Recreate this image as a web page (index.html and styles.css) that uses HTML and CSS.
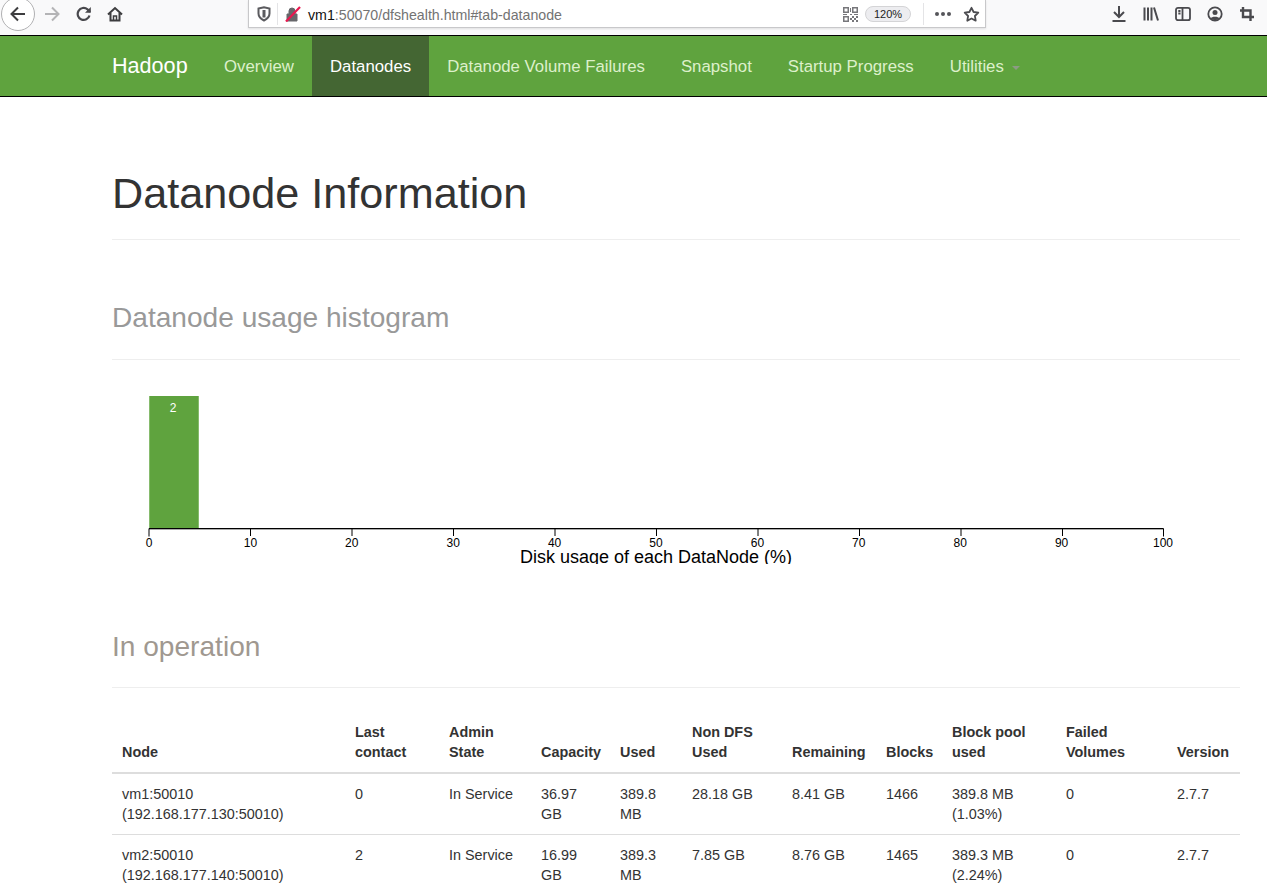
FILE: index.html
```html
<!DOCTYPE html>
<html lang="en">
<head>
    <meta charset="UTF-8">
    <title>Namenode information</title>
    <link rel="stylesheet" href="styles.css">
</head>
<body>
    <div class="browser-bar">
        <div class="nav-buttons">
            <span class="back-button">
                <svg width="18" height="18" viewBox="0 0 18 18" fill="none" stroke="#3d3d3f" stroke-width="2"><path d="M16 9H2.500M9 2.500 2.500 9 9 15.500"/></svg>
            </span>
            <svg class="forward-icon" width="18" height="18" viewBox="0 0 18 18" fill="none" stroke="#b4b4b6" stroke-width="2"><path d="M2 9h13.500M9 2.500 15.500 9 9 15.500"/></svg>
            <svg class="reload-icon" width="16" height="16" viewBox="0 0 16 16" fill="none" stroke="#48484c" stroke-width="2.200"><path d="M13.500 9.500A6 6 0 1 1 11.500 3.300L14 6"/><path d="M14.800 1v5.800H9" stroke="none" fill="#48484c"/></svg>
            <svg class="home-icon" width="16" height="16" viewBox="0 0 16 16" fill="none" stroke="#3d3d3f" stroke-width="2"><path d="M1 8.500 8 2l7 6.500M3.500 7v7.500h9V7"/><path d="M6.500 15V10h3v5" stroke-width="1.500"/></svg>
        </div>
        <div class="url-bar">
            <svg class="shield-icon" width="14" height="16" viewBox="0 0 14 16" fill="none" stroke="#5b5b5f" stroke-width="2"><path d="M1.500 2.500 7 1.200l5.500 1.300v5c0 3.500-2.500 5.500-5.500 7-3-1.500-5.500-3.500-5.500-7z"/><path d="M7 4v7.500" stroke-width="3"/></svg>
            <span class="url-divider"></span>
            <svg class="lock-icon" width="16" height="16" viewBox="0 0 16 16"><path d="M2 8h10v7H2zM4 8V5a3 3 0 0 1 6 0v3" fill="#66666a" stroke="#66666a"/><path d="M1 15.500 15 1" stroke="#e8174f" stroke-width="2.200"/></svg>
            <span class="url-text"><span class="url-host">vm1</span>:50070/dfshealth.html#tab-datanode</span>
            <svg class="qr-icon" width="15" height="15" viewBox="0 0 15 15" fill="#77777b"><path d="M0 0h6v6H0zM1.500 1.500v3h3v-3zM9 0h6v6H9zM10.500 1.500v3h3v-3zM0 9h6v6H0zM1.500 10.500v3h3v-3zM7 1h1v4H7zM7 7h2v1H7zM0 7h4v1H0zM11 7h4v1h-4zM9 9h2v2H9zM13 9h2v2h-2zM7 11h2v2H7zM11 11h2v2h-2zM9 13h2v2H9zM13 13h2v2h-2z"/></svg>
            <span class="zoom-pill">120%</span>
            <span class="url-divider url-divider-right"></span>
            <span class="dots"><i></i><i></i><i></i></span>
            <svg class="star-icon" width="17" height="17" viewBox="0 0 17 17" fill="none" stroke="#4c4c50" stroke-width="1.800"><path d="M8.500 1.800 10.600 6l4.700.7-3.400 3.300.8 4.700-4.200-2.200-4.200 2.200.8-4.700L1.700 6.700 6.400 6z" stroke-linejoin="round"/></svg>
        </div>
        <div class="tool-buttons">
            <svg width="16" height="16" viewBox="0 0 16 16" fill="none" stroke="#4a4a4e" stroke-width="2"><path d="M8 0v10.500M3 6l5 5 5-5M1.500 15h13"/></svg>
            <svg width="16" height="16" viewBox="0 0 16 16" fill="none" stroke="#4a4a4e" stroke-width="2"><path d="M1.500 1.500v13M5 1.500v13M8.500 1.500v13M11 1.500l4 13"/></svg>
            <svg width="16" height="16" viewBox="0 0 16 16" fill="none" stroke="#4a4a4e" stroke-width="1.800"><rect x="1" y="1.800" width="14" height="12.400" rx="2"/><path d="M7.500 2v12M3.300 5h2.200M3.300 7.500h2.200"/></svg>
            <svg width="16" height="16" viewBox="0 0 16 16"><circle cx="8" cy="8" r="6.700" fill="none" stroke="#4a4a4e" stroke-width="1.800"/><circle cx="8" cy="6.500" r="2.500" fill="#4a4a4e"/><path d="M3.500 12.500c1-2.500 8-2.500 9 0L8 14.500z" fill="#4a4a4e"/></svg>
            <svg width="16" height="16" viewBox="0 0 16 16" fill="none" stroke="#4a4a4e" stroke-width="2.400"><path d="M4 1v10h11M1 4.500h10.500V15"/></svg>
        </div>
    </div>

    <nav class="navbar">
        <div class="container navbar-inner">
            <a class="brand">Hadoop</a>
            <ul class="nav-list">
                <li>Overview</li>
                <li class="active">Datanodes</li>
                <li>Datanode Volume Failures</li>
                <li>Snapshot</li>
                <li>Startup Progress</li>
                <li>Utilities <span class="caret"></span></li>
            </ul>
        </div>
    </nav>

    <main class="container">
        <h1 class="page-title">Datanode Information</h1>
        <h2 class="section-title">Datanode usage histogram</h2>
        <svg class="histogram" width="1128" height="204" viewBox="0 0 1128 204">
            <rect x="37" y="36" width="50" height="132" fill="#5fa33e"/>
            <path d="M37.500 36v132M86.500 36v132" stroke="#86bb6d"/>
            <text class="bar-label" x="61" y="52">2</text>
            <path d="M37 169.500H1051.500" stroke="#aaa"/>
            <path d="M37 176.500V168.500H1051.500V176.500" fill="none" stroke="#000"/>
            <g class="ticks">
                <path d="M138.500 168v8M240 168v8M341.500 168v8M443 168v8M544.500 168v8M646 168v8M747.500 168v8M849 168v8M950.500 168v8" stroke="#000"/>
                <text x="37" y="187">0</text>
                <text x="138.400" y="187">10</text>
                <text x="239.800" y="187">20</text>
                <text x="341.200" y="187">30</text>
                <text x="442.600" y="187">40</text>
                <text x="544" y="187">50</text>
                <text x="645.400" y="187">60</text>
                <text x="746.800" y="187">70</text>
                <text x="848.200" y="187">80</text>
                <text x="949.600" y="187">90</text>
                <text x="1051" y="187">100</text>
            </g>
            <text class="axis-title" x="544" y="203">Disk usage of each DataNode (%)</text>
        </svg>
        <h2 class="section-title section-operation">In operation</h2>
        <table class="dn-table">
            <colgroup>
                <col class="col-node"><col class="col-contact"><col class="col-admin"><col class="col-capacity">
                <col class="col-used"><col class="col-nondfs"><col class="col-remaining"><col class="col-blocks">
                <col class="col-pool"><col class="col-failed"><col class="col-version">
            </colgroup>
            <thead>
                <tr>
                    <th>Node</th>
                    <th>Last<br>contact</th>
                    <th>Admin<br>State</th>
                    <th>Capacity</th>
                    <th>Used</th>
                    <th>Non DFS<br>Used</th>
                    <th>Remaining</th>
                    <th>Blocks</th>
                    <th>Block pool<br>used</th>
                    <th>Failed<br>Volumes</th>
                    <th>Version</th>
                </tr>
            </thead>
            <tbody>
                <tr>
                    <td>vm1:50010<br>(192.168.177.130:50010)</td>
                    <td>0</td>
                    <td>In Service</td>
                    <td>36.97<br>GB</td>
                    <td>389.8<br>MB</td>
                    <td>28.18 GB</td>
                    <td>8.41 GB</td>
                    <td>1466</td>
                    <td>389.8 MB<br>(1.03%)</td>
                    <td>0</td>
                    <td>2.7.7</td>
                </tr>
                <tr>
                    <td>vm2:50010<br>(192.168.177.140:50010)</td>
                    <td>2</td>
                    <td>In Service</td>
                    <td>16.99<br>GB</td>
                    <td>389.3<br>MB</td>
                    <td>7.85 GB</td>
                    <td>8.76 GB</td>
                    <td>1465</td>
                    <td>389.3 MB<br>(2.24%)</td>
                    <td>0</td>
                    <td>2.7.7</td>
                </tr>
            </tbody>
        </table>
    </main>
</body>
</html>
```

FILE: styles.css
```css
html, body {
    margin: 0;
    padding: 0;
    height: 892px;
    overflow: hidden;
    background-color: #fff;
}
body {
    font-family: "Liberation Sans", Arial, sans-serif;
    color: #333;
}
.browser-bar {
    display: flex;
    align-items: center;
    height: 35px;
    background-color: #f9f9fa;
    border-bottom: 1px solid #000;
}
.nav-buttons {
    display: flex;
    align-items: center;
    width: 248px;
    margin-top: -8px;
    padding-left: 1px;
    box-sizing: border-box;
}
.back-button {
    display: flex;
    align-items: center;
    justify-content: center;
    width: 34px;
    height: 34px;
    border: 1px solid #b1b1b3;
    border-radius: 50%;
    background-color: #fff;
    box-sizing: border-box;
}
.forward-icon {
    margin-left: 8px;
}
.reload-icon {
    margin-left: 15px;
}
.home-icon {
    margin-left: 15px;
}
.url-bar {
    display: flex;
    align-items: center;
    width: 738px;
    height: 28px;
    margin-top: -7px;
    padding: 1px 0 0 8px;
    box-sizing: border-box;
    background-color: #fff;
    border: 1px solid #c8c8ca;
    border-top: none;
    box-shadow: 0 1px 2px rgba(0, 0, 0, 0.1);
}
.url-divider {
    width: 1px;
    height: 22px;
    margin: 0 7px 0 6px;
    background-color: #e4e4e6;
}
.url-text {
    margin-left: 7px;
    padding-top: 2px;
    width: 535px;
    font-size: 14.200px;
    color: #737373;
}
.url-host {
    color: #111;
}
.zoom-pill {
    margin-left: 7px;
    padding: 1px 8px;
    font-size: 11px;
    color: #222;
    background-color: #ededf0;
    border: 1px solid #d4d4d6;
    border-radius: 9px;
}
.url-divider-right {
    margin: 0 11px 0 12px;
}
.dots {
    display: flex;
    gap: 2px;
}
.dots i {
    width: 4px;
    height: 4px;
    border-radius: 50%;
    background-color: #55555a;
}
.star-icon {
    margin-left: 12px;
}
.tool-buttons {
    display: flex;
    align-items: center;
    gap: 16px;
    margin-top: -8px;
    margin-left: 125px;
}
.container {
    width: 1128px;
    margin-left: 112px;
}
.navbar {
    height: 60px;
    background-color: #5fa33e;
    border-bottom: 1px solid #000;
}
.navbar-inner {
    display: flex;
    height: 60px;
}
.brand {
    margin-right: 18.400px;
    font-size: 21.600px;
    line-height: 60px;
    color: #fff;
}
.nav-list {
    display: flex;
    margin: 0;
    padding: 0;
    list-style: none;
}
.nav-list li {
    padding: 1px 18px 0;
    font-size: 16.800px;
    line-height: 59px;
    color: #ddf0cb;
}
.nav-list li.active {
    color: #fff;
    background-color: #446633;
}
.caret {
    display: inline-block;
    margin-left: 3px;
    vertical-align: middle;
    border-top: 4px solid #8c9b84;
    border-left: 4px solid transparent;
    border-right: 4px solid transparent;
}
.page-title {
    margin: 0;
    padding: 72px 0 22px;
    font-size: 43.200px;
    line-height: 48px;
    font-weight: 400;
    border-bottom: 1px solid #eee;
}
.section-title {
    margin: 0;
    padding: 61px 0 24px;
    font-size: 28.100px;
    line-height: 34px;
    font-weight: 400;
    color: #999;
    border-bottom: 1px solid #eee;
}
.histogram {
    display: block;
}
.bar-label {
    font-size: 12px;
    fill: #fff;
    text-anchor: middle;
}
.ticks text {
    font-size: 12px;
    fill: #000;
    text-anchor: middle;
}
.axis-title {
    font-size: 18px;
    fill: #000;
    text-anchor: middle;
}
.section-operation {
    padding: 66px 0 23px;
    color: #a09890;
}
.dn-table {
    width: 1128px;
    margin-top: 34px;
    table-layout: fixed;
    border-collapse: collapse;
    font-size: 14.400px;
    line-height: 20px;
}
.col-node { width: 233px; }
.col-contact { width: 94px; }
.col-admin { width: 92px; }
.col-capacity { width: 79px; }
.col-used { width: 72px; }
.col-nondfs { width: 100px; }
.col-remaining { width: 94px; }
.col-blocks { width: 66px; }
.col-pool { width: 114px; }
.col-failed { width: 111px; }
.col-version { width: 73px; }
.dn-table th {
    padding: 0 10px 10px;
    text-align: left;
    vertical-align: bottom;
    border-bottom: 2px solid #ddd;
}
.dn-table td {
    padding: 10px 10px 10px;
    vertical-align: top;
    border-bottom: 1px solid #ddd;
}
```
